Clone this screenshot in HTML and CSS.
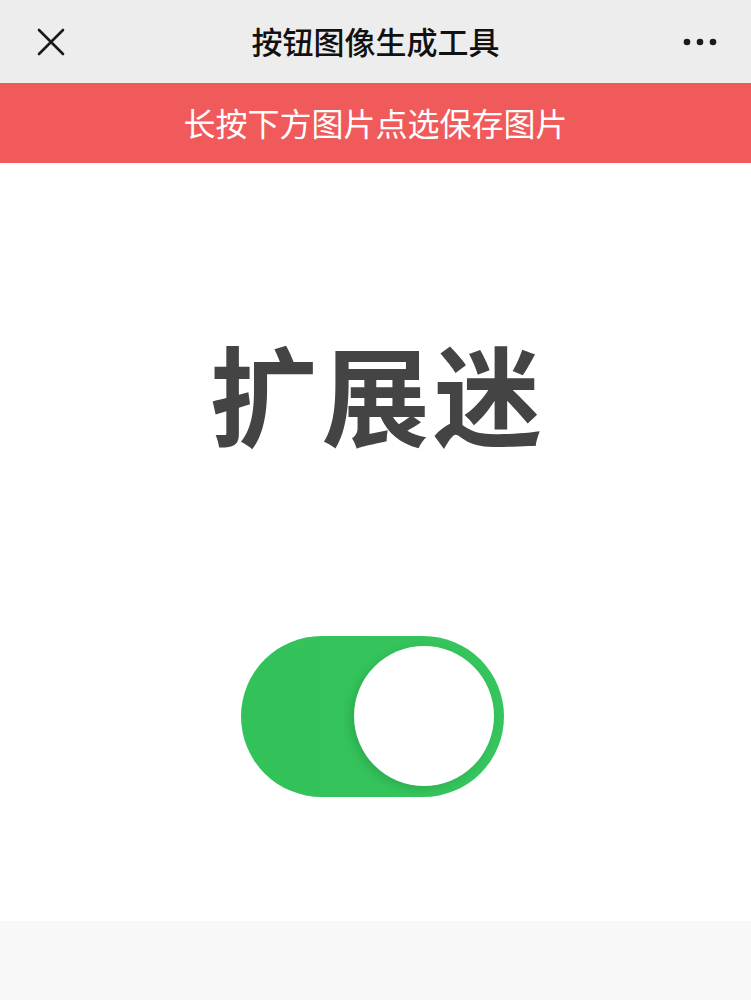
FILE: index.html
```html
<!DOCTYPE html>
<html lang="zh">
<head>
<meta charset="utf-8">
<link rel="stylesheet" href="styles.css">
</head>
<body>
<div class="page">
  <header class="navbar">
    <span class="close" aria-label="关闭">
      <svg width="30" height="30" viewBox="0 0 30 30"><path d="M3 3 L27 27 M27 3 L3 27" stroke="#1a1a1a" stroke-width="2.6" stroke-linecap="round" fill="none"/></svg>
    </span>
    <h1 class="title">按钮图像生成工具</h1>
    <span class="more" aria-label="更多">
      <svg width="34" height="10" viewBox="0 0 34 10"><circle cx="4" cy="5" r="3.3" fill="#1a1a1a"/><circle cx="17" cy="5" r="3.3" fill="#1a1a1a"/><circle cx="30" cy="5" r="3.3" fill="#1a1a1a"/></svg>
    </span>
  </header>
  <div class="banner">长按下方图片点选保存图片</div>
  <main class="canvas">
    <div class="label">扩展迷</div>
    <div class="switch"><div class="knob"></div></div>
  </main>
  <footer class="bottom"></footer>
</div>
</body>
</html>
```
FILE: styles.css
```css
* { box-sizing: border-box; margin: 0; padding: 0; }
html, body { width: 751px; height: 1000px; overflow: hidden; }
body { font-family: "Noto Sans CJK SC", "Noto Sans", sans-serif; background: #f8f8f8; }
.page { display: flex; flex-direction: column; height: 1000px; }
.navbar {
  height: 83px; background: #ededed;
  display: flex; align-items: center; justify-content: space-between;
  padding: 0 34px 0 36px; position: relative;
}
.close { display: flex; width: 30px; height: 30px; }
.more { display: flex; width: 34px; height: 10px; }
.title {
  position: absolute; left: 0; right: 0; top: 0; height: 83px;
  display: flex; align-items: center; justify-content: center;
  font-size: 31px; font-weight: 500; color: #111; pointer-events: none;
  padding-bottom: 2px;
}
.banner {
  height: 80px; background: #f05a5b; color: #fff;
  display: flex; align-items: center; justify-content: center;
  font-size: 32px; font-weight: 400; padding-bottom: 2px;
}
.canvas {
  height: 758px; background: #fff;
  display: flex; flex-direction: column; align-items: center;
}
.label {
  margin-top: 164px; font-size: 108px; font-weight: 700; color: #444;
  line-height: 1.2; letter-spacing: 4px; padding-left: 4px;
}
.switch {
  margin-top: 179px; margin-left: -6px;
  width: 263px; height: 161px; border-radius: 81px;
  background: linear-gradient(90deg, #33c25a 0%, #35c55c 100%);
  display: flex; align-items: center; justify-content: flex-end;
  padding-right: 10px;
}
.knob {
  width: 140px; height: 140px; border-radius: 50%; background: #fff;
  box-shadow: -4px 3px 8px rgba(0,0,0,0.12);
}
.bottom { flex: 1; background: #f8f8f8; }
```
